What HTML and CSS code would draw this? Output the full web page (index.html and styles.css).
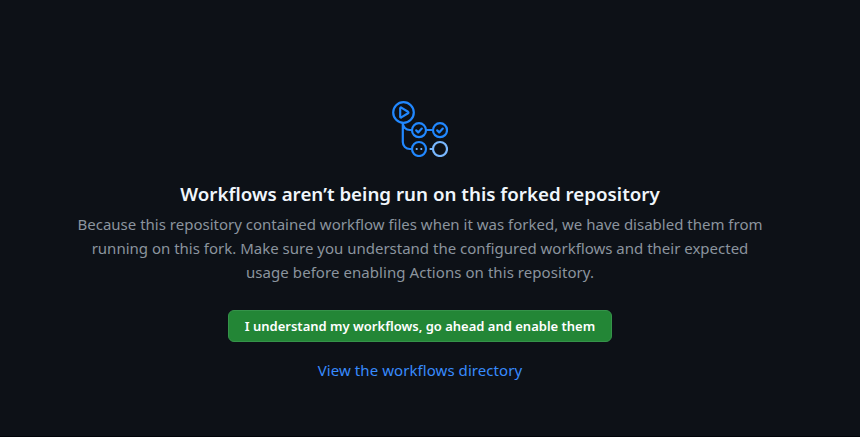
FILE: index.html
```
<!DOCTYPE html>
<html lang="en">
<head>
<meta charset="utf-8">
<title>Actions</title>
<link rel="stylesheet" href="styles.css">
</head>
<body>
<main class="blankslate">
  <svg class="icon" width="56" height="56" viewBox="0 0 56 56" fill="none" stroke="#2188ff" stroke-width="2.2" stroke-linecap="round" stroke-linejoin="round">
    <path d="M10.800 22v19a7 7 0 0 0 7 7H20M10.800 22a7 7 0 0 0 7 7H20M34 29h7"/>
    <circle cx="11.500" cy="11.500" r="10.300"/>
    <path d="M8.200 7.300v8.400c0 .7.500 1 1.100.7l6.700-4.100c.6-.4.6-1.100 0-1.500L9.300 6.600c-.6-.3-1.100 0-1.100.7z"/>
    <circle cx="27" cy="29.200" r="7"/>
    <circle cx="48" cy="29.200" r="7"/>
    <path d="m24.200 29.400 2 2 3.600-3.800M45.200 29.400l2 2 3.600-3.800"/>
    <circle cx="27" cy="48" r="7"/>
    <path stroke="#79b8ff" d="M24.700 48h.01M29.300 48h.01M38.500 48h2"/>
    <circle cx="48" cy="48" r="7" stroke="#79b8ff"/>
  </svg>
  <h1 class="title">Workflows aren’t being run on this forked repository</h1>
  <p class="text">
    <span class="line">Because this repository contained workflow files when it was forked, we have disabled them from</span>
    <span class="line">running on this fork. Make sure you understand the configured workflows and their expected</span>
    <span class="line last">usage before enabling Actions on this repository.</span>
  </p>
  <button class="enable" type="button">I understand my workflows, go ahead and enable them</button>
  <a class="link" href="#">View the workflows directory</a>
</main>
</body>
</html>
```
FILE: styles.css
```
* { box-sizing: border-box; }
body {
  margin: 0;
  min-height: 437px;
  background: #0d1117;
  border-bottom: 1px solid #010409;
  font-family: "Noto Sans", sans-serif;
}
.blankslate {
  display: flex;
  flex-direction: column;
  align-items: center;
  width: 840px;
  padding-top: 101px;
}
.icon { display: block; }
.title {
  margin: 22px 0 3px;
  font-size: 18.75px;
  line-height: 30px;
  font-weight: 600;
  color: #f0f6fc;
}
.text {
  margin: 0;
  font-size: 15px;
  line-height: 24px;
  color: #8b949e;
  display: flex;
  flex-direction: column;
  align-items: center;
  white-space: nowrap;
}
.last { letter-spacing: 0.06px; }
.enable {
  width: 384px;
  height: 32px;
  margin: 26px 0 16px;
  padding: 0;
  border: 1px solid #35934a;
  border-radius: 6px;
  background: #238636;
  color: #fff;
  font: 600 13px/20px "Noto Sans", sans-serif;
  white-space: nowrap;
}
.link {
  font-size: 15px;
  letter-spacing: 0.07px;
  line-height: 24px;
  color: #388bfd;
  text-decoration: none;
}
```
